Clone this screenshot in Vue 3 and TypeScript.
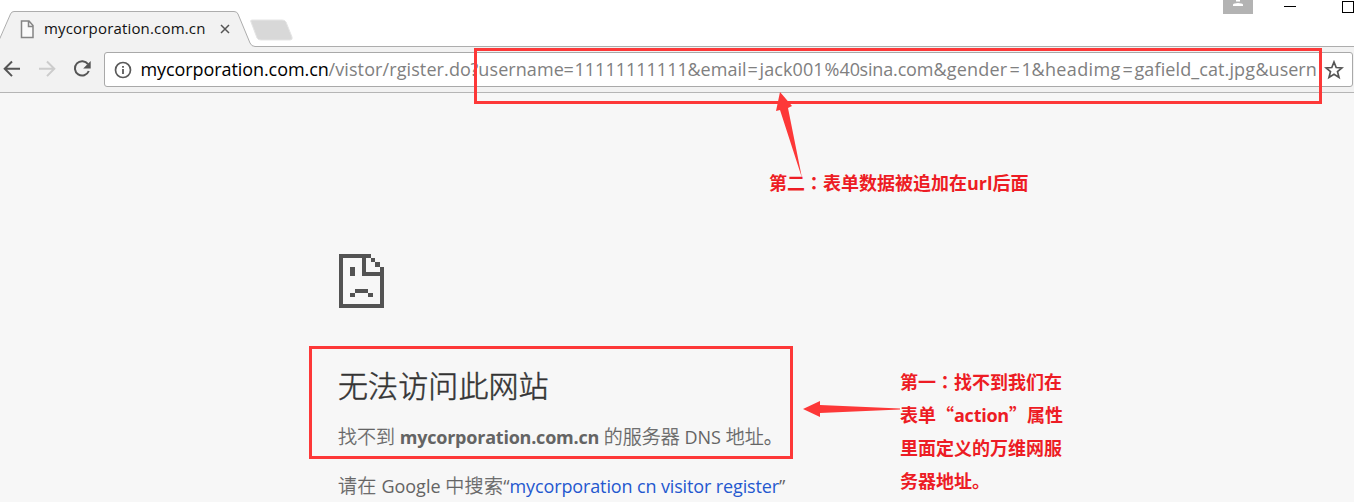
<script setup lang="ts">
interface UrlPart { text: string; width: number; spacing: number; host?: boolean }

const urlParts: UrlPart[] = [
  { text: 'mycorporation.com.cn', width: 188, spacing: -0.08, host: true },
  { text: '/vistor/rgister.do', width: 142, spacing: 0.1 },
  { text: '?username', width: 93, spacing: 0.08 },
  { text: '=', width: 11, spacing: 0 },
  { text: '11111111111', width: 113, spacing: 0 },
  { text: '&email', width: 60, spacing: 0 },
  { text: '=', width: 12, spacing: 0 },
  { text: 'jack001', width: 65, spacing: 0.1 },
  { text: '%40', width: 35, spacing: 0 },
  { text: 'sina.com', width: 74, spacing: -0.15 },
  { text: '&gender', width: 76, spacing: 0.2 },
  { text: '=', width: 12, spacing: 0 },
  { text: '1', width: 10, spacing: 0 },
  { text: '&headimg', width: 91, spacing: 0.35 },
  { text: '=', width: 12, spacing: 0 },
  { text: 'gafield_cat.jpg', width: 121, spacing: 0.1 },
  { text: '&usern', width: 62, spacing: 0 },
]
</script>

<template>
  <div class="window">
    <header class="tabs">
      <svg class="tab-shapes" width="1354" height="47" viewBox="0 0 1354 47">
        <path d="M-3 47L10.5 14Q11.5 11.5 14 11.5H234Q237 11.5 238 14L250 43Q251.500 46.500 255 46.500H1354V47Z" fill="#f2f2f2" />
        <path d="M-3 45L10.5 14Q11.5 11.500 14 11.500H234Q237 11.500 238 14L250 43Q251.500 46.500 255 46.500H1354" fill="none" stroke="#adadad" />
        <path d="M252 20H282Q285 20 286 22L292 37Q293 40 290 40H261Q258 40 257 38L251 22Q250 20 252 20Z" fill="#d8d8d8" stroke="#e5e5e5" />
        <path d="M21.500 21H29L33 25.500V37.500H21.500ZM28.500 21V26.500H33" fill="#fafafa" stroke="#858585" stroke-width="1.500" />
        <path d="M221 25L229 33M229 25L221 33" stroke="#555" stroke-width="1.500" />
        <rect x="1223" y="0" width="30" height="14" fill="#b3b3b3" />
        <path d="M1236 0H1240V1.500H1236ZM1233 6V4.500Q1234 3 1238 3T1243 4.500V6Z" fill="#fff" />
        <path d="M1284 6.500H1296" stroke="#000" />
        <rect x="1342.500" y="1.500" width="11" height="11" fill="none" stroke="#000" />
      </svg>
      <span class="tab-title">mycorporation.com.cn</span>
    </header>

    <nav class="toolbar">
      <svg class="nav-icons" width="104" height="45" viewBox="0 47 104 45" fill="none">
        <path d="M20 68.800H5M12 61.500L4.700 68.800L12 76.100" stroke="#555" stroke-width="2" />
        <path d="M39 68.800H54M47 61.500L54.300 68.800L47 76.100" stroke="#ccc" stroke-width="2" />
        <path d="M88 64.200A7.200 7.200 0 1 0 88.800 71" stroke="#555" stroke-width="2" />
        <path d="M90.700 61V68.500H83.200Z" fill="#555" />
      </svg>
      <div class="address">
        <svg class="info" width="18" height="18" viewBox="0 0 18 18" fill="none" stroke="#5a5a5a">
          <circle cx="9" cy="9" r="7.500" stroke-width="1.700" />
          <path d="M9 8V13M9 5V6.800" stroke-width="1.800" />
        </svg>
        <div class="url">
          <span v-for="(part, i) in urlParts" :key="i" class="part" :class="{ host: part.host }" :style="{ width: part.width + 'px', letterSpacing: part.spacing + 'px' }">{{ part.text }}</span>
        </div>
        <svg class="star" width="20" height="20" viewBox="0 0 20 20">
          <path d="M10 2L12.200 7.500L18 7.900L13.500 11.600L15 17.400L10 14.200L5 17.400L6.500 11.600L2 7.900L7.800 7.500Z" fill="none" stroke="#555" stroke-width="1.700" />
        </svg>
      </div>
    </nav>

    <main class="page">
      <svg class="sad" width="46" height="54" viewBox="0 0 46 54" shape-rendering="crispEdges" fill="#535353">
        <path d="M0 0H32V4H27V18H45V54H0ZM4 4V50H41V22H23V4Z" fill-rule="evenodd" />
        <path d="M32 4H36V8H32ZM36 8H41V13H36ZM41 13H45V18H41ZM11 13H16V22H11ZM16 35H29V39H16ZM11 39H16V43H11ZM29 39H34V43H29Z" />
      </svg>
      <h1>无法访问此网站</h1>
      <p class="reason"><span class="han">找不到</span> <b>mycorporation.com.cn</b> <span class="han">的服务器</span> DNS <span class="han">地址。</span></p>
      <p class="search"><span class="han">请在</span> Google <span class="han">中搜索</span>“<a>mycorporation cn visitor register</a>”</p>
    </main>

    <div class="frame frame-url"></div>
    <div class="frame frame-error"></div>
    <svg class="arrows" width="1354" height="502" viewBox="0 0 1354 502" fill="#fd3838">
      <path d="M780 92L792 106L788 108L802 178L780 110L776 111Z" />
      <path d="M803 409L820 401V405L900 408.500V409.500L820 413V417Z" />
    </svg>
    <div class="note note-url">第二<span class="colon">：</span>表单数据被追加在url后面</div>
    <div class="note note-error">
      <div>第一<span class="colon">：</span>找不到我们在</div>
      <div>表单<span class="quote">“</span><span class="word">action</span><span class="quote">”</span>属性</div>
      <div>里面定义的万维网服</div>
      <div>务器地址。</div>
    </div>
  </div>
</template>

<style>
html, body { margin: 0; overflow: hidden; }
</style>
<style scoped>
.window { position: relative; width: 1354px; height: 502px; overflow: hidden; background: #f7f7f7; font-family: "Open Sans", "Noto Sans CJK SC", sans-serif; display: flex; flex-direction: column; }
.tabs { position: relative; height: 47px; flex: none; background: #fff; }
.tab-shapes { position: absolute; inset: 0; }
.tab-title { position: relative; display: block; padding: 16px 0 0 44px; font-size: 15px; line-height: 24px; color: #111; letter-spacing: 0.17px; white-space: nowrap; }
.toolbar { box-sizing: border-box; height: 46px; flex: none; display: flex; background: #f2f2f2; border-bottom: 1px solid #b5b5b5; }
.nav-icons { flex: none; }
.address { box-sizing: border-box; width: 1249px; height: 35px; margin-top: 5px; border: 1px solid #a9a9a9; border-radius: 3px; background: #fff; display: flex; align-items: center; }
.info { flex: none; margin: 1px 0 0 9px; }
.url { display: flex; width: 1178px; margin: -2px 0 0 8.500px; font-size: 18px; line-height: 32px; color: #808080; white-space: nowrap; flex: none; }
.part { flex: none; }
.host { color: #000; }
.star { margin-left: 5.500px; flex: none; }
.page { padding: 161px 0 0 339px; white-space: nowrap; color: #646464; }
.sad { display: block; }
h1 { margin: 58px 0 0 -1px; font-size: 30px; line-height: 36px; font-weight: 300; color: #333; font-family: "Noto Sans CJK SC", sans-serif; letter-spacing: 0.1px; -webkit-text-stroke: 0.5px #333; }
p { margin: 0 0 0 -1px; font-size: 18px; line-height: 28px; height: 28px; white-space: pre; }
.han { font-family: "Noto Sans CJK SC", sans-serif; font-size: 19px; line-height: 1; font-weight: 300; -webkit-text-stroke: 0.3px #646464; }
.reason { margin-top: 21px; }
.reason b { letter-spacing: -0.22px; }
.search { margin-top: 21px; }
.search .han { letter-spacing: 0.35px; }
a { color: #2458cf; letter-spacing: -0.13px; }
.frame { position: absolute; box-sizing: border-box; border: 3px solid #fd3838; }
.frame-url { left: 474px; top: 48px; width: 848px; height: 56px; }
.frame-error { left: 309px; top: 346px; width: 484px; height: 113px; }
.arrows { position: absolute; left: 0; top: 0; }
.note { position: absolute; color: #ed1c24; font-size: 18px; font-weight: 700; line-height: 33px; white-space: nowrap; }
.note > div { height: 33px; }
.colon { font-family: "Noto Sans CJK TC", sans-serif; line-height: 1; }
.quote { font-family: "Noto Sans CJK SC", sans-serif; line-height: 1; }
.word { letter-spacing: -0.25px; }
.note-url { left: 769px; top: 167px; }
.note-error { left: 900px; top: 366px; }
</style>
